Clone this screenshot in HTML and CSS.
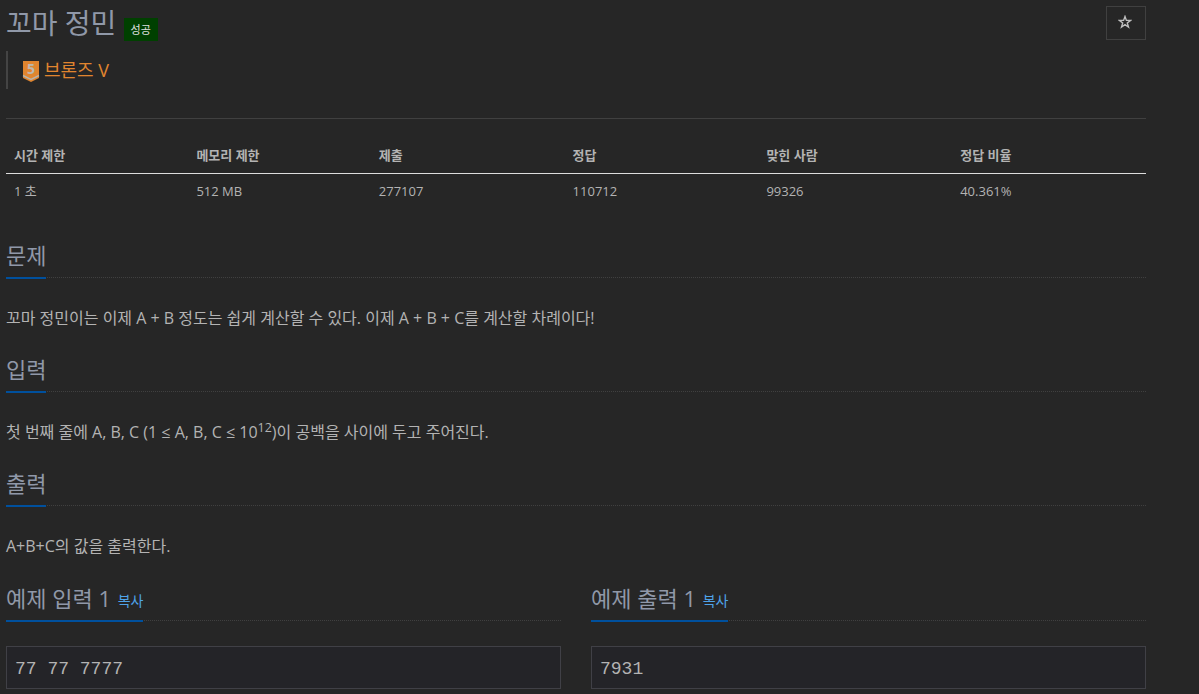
FILE: index.html
```html
<!DOCTYPE html>
<html lang="ko">
  <head>
    <meta charset="utf-8">
    <title>꼬마 정민</title>
    <link rel="stylesheet" href="styles.css">
  </head>
  <body>
    <div class="container">
      <div class="page-header">
        <div>
          <h1>꼬마 정민 <span class="label-success">성공</span></h1>
          <blockquote>
            <svg class="tier" width="16" height="21" viewBox="0 0 16 21">
              <path d="M0 0h16v17l-8 4-8-4z" fill="#e0852f"/>
              <path d="M0 14.500l8 4 8-4" fill="none" stroke="#b8b2a9" stroke-width="1.500"/>
              <text x="8" y="13" text-anchor="middle">5</text>
            </svg>
            <span>브론즈 V</span>
          </blockquote>
        </div>
        <button type="button" class="favorite">
          <svg width="14" height="14" viewBox="0 0 14 14">
            <path d="M7 1.500l1.400 3.900h4.200L9.300 7.900l1.200 4.100L7 9.600 3.500 12l1.200-4.100L1.400 5.400h4.200z" fill="none" stroke="#bdbdbd" stroke-width="1.400"/>
          </svg>
        </button>
      </div>

      <table>
        <thead>
          <tr>
            <th>시간 제한</th>
            <th>메모리 제한</th>
            <th>제출</th>
            <th>정답</th>
            <th>맞힌 사람</th>
            <th>정답 비율</th>
          </tr>
        </thead>
        <tbody>
          <tr>
            <td>1 초</td>
            <td>512 MB</td>
            <td>277107</td>
            <td>110712</td>
            <td>99326</td>
            <td>40.361%</td>
          </tr>
        </tbody>
      </table>

      <section>
        <div class="headline"><h2>문제</h2></div>
        <p>꼬마 정민이는 이제 A + B 정도는 쉽게 계산할 수 있다. 이제 A + B + C를 계산할 차례이다!</p>
      </section>
      <section>
        <div class="headline"><h2>입력</h2></div>
        <p>첫 번째 줄에 A, B, C (1 ≤ A, B, C ≤ 10<sup>12</sup>)이 공백을 사이에 두고 주어진다.</p>
      </section>
      <section>
        <div class="headline"><h2>출력</h2></div>
        <p>A+B+C의 값을 출력한다.</p>
      </section>

      <div class="samples">
        <div>
          <div class="headline"><h2>예제 입력 1 <a>복사</a></h2></div>
          <pre>77 77 7777</pre>
        </div>
        <div>
          <div class="headline"><h2>예제 출력 1 <a>복사</a></h2></div>
          <pre>7931</pre>
        </div>
      </div>
    </div>
  </body>
</html>
```
FILE: styles.css
```css
* {
  box-sizing: border-box;
}
body {
  margin: 0;
  background: #262626;
  color: #b3b3b3;
  font-family: "Open Sans", "Noto Sans CJK KR", sans-serif;
  font-size: 13px;
  overflow: hidden;
}
.container {
  width: 1140px;
  margin-left: 6px;
}
.page-header {
  display: flex;
  justify-content: space-between;
  align-items: flex-start;
  height: 119px;
  border-bottom: 1px solid #404040;
}
h1 {
  margin: 3px 0 8px;
  height: 40px;
  color: #9098a8;
  font-size: 28px;
  font-weight: 400;
  line-height: 40px;
}
.label-success {
  display: inline-block;
  padding: 0 7px;
  background: #004000;
  color: #e0e0e0;
  font-size: 11px;
  line-height: 23px;
}
blockquote {
  display: flex;
  align-items: center;
  gap: 5px;
  height: 38px;
  margin: 0;
  padding-left: 15px;
  border-left: 2px solid #444;
  color: #e0852f;
  font-size: 18px;
}
blockquote span {
  margin-top: -2px;
}
.tier {
  margin-top: 2px;
  overflow: visible;
}
.tier text {
  fill: #bdb8b0;
  font-size: 14px;
  font-weight: 700;
}
.favorite {
  display: flex;
  align-items: center;
  justify-content: center;
  width: 40px;
  height: 34px;
  margin-top: 6px;
  padding: 0 2px 2px 0;
  border: 1px solid #404040;
  background: #262626;
}
table {
  width: 100%;
  margin: 18px 0 30px;
  border-collapse: collapse;
  table-layout: fixed;
}
th, td {
  height: 36px;
  padding: 0 8px;
  line-height: 18px;
  text-align: left;
}
th {
  border-bottom: 1px solid #ddd;
}
th:nth-child(-n+2) {
  width: 16%;
}
th:nth-child(n+3) {
  width: 17%;
}
.headline {
  height: 39px;
  border-bottom: 1px dotted #404040;
}
h2 {
  display: inline-block;
  height: 40px;
  margin: 0;
  border-bottom: 2px solid #00509d;
  color: #9098a8;
  font-size: 22px;
  font-weight: 400;
  line-height: 33px;
}
section {
  height: 114px;
}
p {
  margin: 26px 0 0;
  font-size: 16px;
  line-height: 28px;
}
sup {
  position: relative;
  top: -6px;
  font-size: 12.500px;
  line-height: 0;
  vertical-align: baseline;
}
h2 a {
  margin-left: 1px;
  color: #4fa3e8;
  font-size: 14px;
  line-height: 0;
  vertical-align: 1px;
}
.samples {
  display: grid;
  grid-template-columns: 555px 555px;
  gap: 30px;
  margin-top: 1px;
}
pre {
  height: 43px;
  margin: 25px 0 0;
  padding: 0 8px;
  border: 1px solid #404046;
  background: #242428;
  font-family: "Liberation Mono", monospace;
  font-size: 18px;
  line-height: 44px;
}
```
